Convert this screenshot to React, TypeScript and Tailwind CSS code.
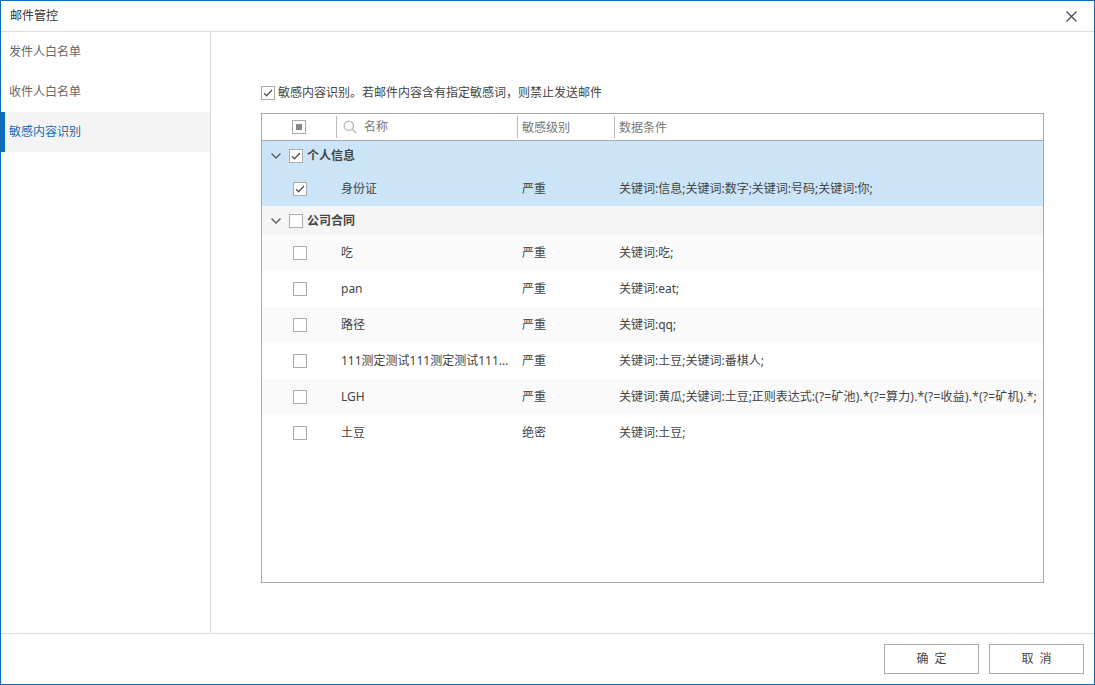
import React from "react";

const FONT = '"Noto Sans", "Noto Sans CJK SC", sans-serif';

function Check({ checked = false, className = "" }: { checked?: boolean; className?: string }) {
  return (
    <span className={`flex h-[14px] w-[14px] shrink-0 items-center justify-center border border-[#aaaaaa] bg-white ${className}`}>
      {checked && (
        <svg width="10" height="8" viewBox="0 0 10 8" fill="none">
          <path d="M1 4.2 L3.6 6.8 L9 1" stroke="#555555" strokeWidth="1.3" />
        </svg>
      )}
    </span>
  );
}

function Chevron() {
  return (
    <svg width="10" height="6" viewBox="0 0 10 6" fill="none">
      <path d="M0.5 0.5 L5 5 L9.5 0.5" stroke="#555555" strokeWidth="1.3" />
    </svg>
  );
}

const rows: { name: string; level: string; cond: React.ReactNode; bg: string }[] = [
  { name: "吃", level: "严重", cond: "关键词:吃;", bg: "bg-[#fafafa]" },
  { name: "pan", level: "严重", cond: "关键词:eat;", bg: "bg-white" },
  { name: "路径", level: "严重", cond: "关键词:qq;", bg: "bg-[#fafafa]" },
  { name: "111测定测试111测定测试111...", level: "严重", cond: "关键词:土豆;关键词:番棋人;", bg: "bg-white" },
  {
    name: "LGH",
    level: "严重",
    cond: (
      <>
        关键词:黄瓜;关键词:土豆;正则表达式:<span className="tracking-[0.19px]">(?=矿池).*(?=算力).*(?=收益).*(?=矿机).*;</span>
      </>
    ),
    bg: "bg-[#fafafa]",
  },
  { name: "土豆", level: "绝密", cond: "关键词:土豆;", bg: "bg-white" },
];

function Row({ name, level, cond, bg, checked = false, height = "h-[36px]" }: { name: string; level: string; cond: React.ReactNode; bg: string; checked?: boolean; height?: string }) {
  return (
    <div className={`flex items-center ${height} ${bg}`}>
      <div className="flex w-[75px] shrink-0 justify-center pl-[1px]">
        <Check checked={checked} />
      </div>
      <div className="w-[181px] shrink-0 whitespace-nowrap pl-[4px]">{name}</div>
      <div className="w-[97px] shrink-0 pl-[4px]">{level}</div>
      <div className="min-w-0 flex-1 whitespace-nowrap pl-[4px]">{cond}</div>
    </div>
  );
}

function Group({ name, checked, bg, height }: { name: string; checked: boolean; bg: string; height: string }) {
  return (
    <div className={`flex items-center pl-[9px] ${height} ${bg}`}>
      <Chevron />
      <Check checked={checked} className="ml-[8px]" />
      <span className="ml-[4px] font-bold">{name}</span>
    </div>
  );
}

function HeaderCell({ width, children }: { width: string; children: React.ReactNode }) {
  return (
    <div className={`flex h-[22px] items-center border-l border-[#bbbbbb] pl-[4px] text-[#777777] ${width}`}>
      {children}
    </div>
  );
}

export default function App() {
  return (
    <div
      className="flex h-[685px] w-[1095px] flex-col border border-[#0f6cbd] bg-white text-[12px] text-[#444444]"
      style={{ fontFamily: FONT }}
    >
      <div className="flex h-[31px] shrink-0 items-center justify-between border-b border-[#dddddd] pl-[9px] pr-[17px]">
        <span className="text-[#333333]">邮件管控</span>
        <svg width="11" height="11" viewBox="0 0 11 11" fill="none">
          <path d="M0.5 0.5 L10.5 10.5 M10.5 0.5 L0.5 10.5" stroke="#444444" strokeWidth="1.1" />
        </svg>
      </div>

      <div className="flex min-h-0 flex-1">
        <aside className="w-[210px] shrink-0 border-r border-[#dddddd]">
          <div className="flex h-[40px] items-center pl-[8px] text-[#666666]">发件人白名单</div>
          <div className="flex h-[40px] items-center pl-[8px] text-[#666666]">收件人白名单</div>
          <div className="flex h-[40px] items-center border-l-4 border-[#0f6cbd] bg-[#f4f4f4] pl-[4px] text-[#0f6cbd]">敏感内容识别</div>
        </aside>

        <main className="min-w-0 flex-1 pl-[50px] pr-[50px] pt-[53px]">
          <label className="flex h-[16px] items-center">
            <Check checked />
            <span className="ml-[3px]">敏感内容识别。若邮件内容含有指定敏感词，则禁止发送邮件</span>
          </label>

          <div className="mt-[12px] h-[470px] w-[783px] border border-[#aaaaaa]">
            <div className="flex h-[27px] items-center border-b border-[#aaaaaa]">
              <div className="flex w-[74px] shrink-0 justify-center">
                <span className="flex h-[14px] w-[14px] items-center justify-center border border-[#aaaaaa]">
                  <span className="h-[6px] w-[6px] bg-[#888888]" />
                </span>
              </div>
              <HeaderCell width="w-[181px] shrink-0">
                <svg width="14" height="14" viewBox="0 0 14 14" fill="none" className="ml-[2px]">
                  <circle cx="5.8" cy="5.8" r="4.6" stroke="#bbbbbb" strokeWidth="1.4" />
                  <path d="M9.2 9.2 L13 13" stroke="#bbbbbb" strokeWidth="1.6" />
                </svg>
                <span className="ml-[7px]">名称</span>
              </HeaderCell>
              <HeaderCell width="w-[97px] shrink-0 pt-[2px]">敏感级别</HeaderCell>
              <HeaderCell width="flex-1 pt-[2px]">数据条件</HeaderCell>
            </div>

            <div className="bg-[#cce4f7]">
              <Group name="个人信息" checked bg="" height="h-[30px]" />
              <Row name="身份证" level="严重" cond="关键词:信息;关键词:数字;关键词:号码;关键词:你;" bg="" checked height="h-[35px]" />
            </div>
            <Group name="公司合同" checked={false} bg="bg-[#f5f5f5]" height="h-[29px]" />
            {rows.map((r) => (
              <Row key={r.name} {...r} />
            ))}
          </div>
        </main>
      </div>

      <div className="flex h-[51px] shrink-0 items-center justify-end gap-[10px] border-t border-[#dddddd] pr-[10px]">
        <button className="h-[30px] w-[95px] border border-[#aaaaaa] bg-white pl-[6px] tracking-[6px] text-[#444444]">确定</button>
        <button className="h-[30px] w-[95px] border border-[#aaaaaa] bg-white pl-[6px] tracking-[6px] text-[#444444]">取消</button>
      </div>
    </div>
  );
}
